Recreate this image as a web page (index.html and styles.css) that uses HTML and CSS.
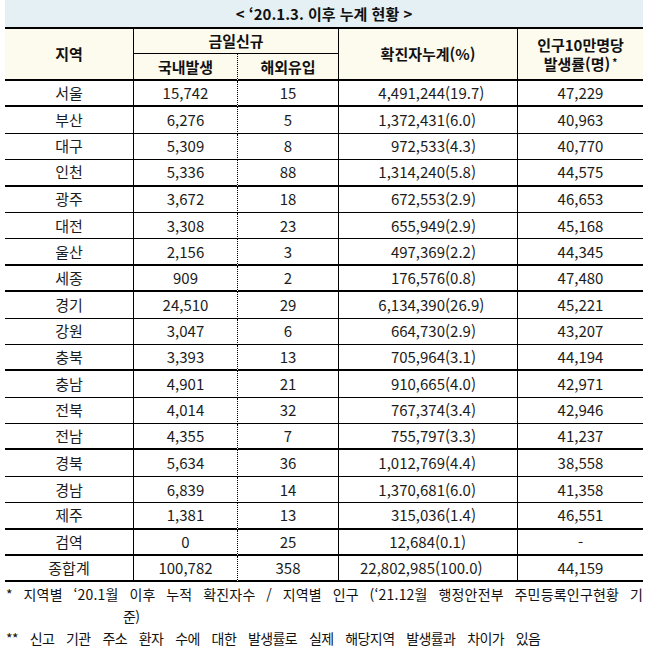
FILE: index.html
```html
<!DOCTYPE html>
<html lang="ko">
<head>
<meta charset="utf-8">
<title>누계 현황</title>
<link rel="stylesheet" href="styles.css">
</head>
<body>
<div class="sheet">
  <div class="title">&lt; ‘20.1.3. 이후 누계 현황 &gt;</div>
  <table class="grid">
    <colgroup>
      <col class="c1"><col class="c2"><col class="c3"><col class="c4"><col class="c5">
    </colgroup>
    <thead>
      <tr class="h1">
        <th rowspan="2" class="vr">지역</th>
        <th colspan="2" class="vr sub">금일신규</th>
        <th rowspan="2" class="vr">확진자누계(%)</th>
        <th rowspan="2" class="two"><div>인구10만명당</div><div>발생률(명)<span class="star">*</span></div></th>
      </tr>
      <tr class="h2">
        <th class="dot">국내발생</th>
        <th class="vr">해외유입</th>
      </tr>
    </thead>
    <tbody>
      <tr class="thick"><td class="vr">서울</td><td class="dot">15,742</td><td class="vr">15</td><td class="vr"><div class="cum"><span class="num">4,491,244</span><span>(19.7)</span></div></td><td>47,229</td></tr>
      <tr><td class="vr">부산</td><td class="dot">6,276</td><td class="vr">5</td><td class="vr"><div class="cum"><span class="num">1,372,431</span><span>(6.0)</span></div></td><td>40,963</td></tr>
      <tr><td class="vr">대구</td><td class="dot">5,309</td><td class="vr">8</td><td class="vr"><div class="cum"><span class="num">972,533</span><span>(4.3)</span></div></td><td>40,770</td></tr>
      <tr class="thick"><td class="vr">인천</td><td class="dot">5,336</td><td class="vr">88</td><td class="vr"><div class="cum"><span class="num">1,314,240</span><span>(5.8)</span></div></td><td>44,575</td></tr>
      <tr><td class="vr">광주</td><td class="dot">3,672</td><td class="vr">18</td><td class="vr"><div class="cum"><span class="num">672,553</span><span>(2.9)</span></div></td><td>46,653</td></tr>
      <tr><td class="vr">대전</td><td class="dot">3,308</td><td class="vr">23</td><td class="vr"><div class="cum"><span class="num">655,949</span><span>(2.9)</span></div></td><td>45,168</td></tr>
      <tr class="thick"><td class="vr">울산</td><td class="dot">2,156</td><td class="vr">3</td><td class="vr"><div class="cum"><span class="num">497,369</span><span>(2.2)</span></div></td><td>44,345</td></tr>
      <tr class="thick"><td class="vr">세종</td><td class="dot">909</td><td class="vr">2</td><td class="vr"><div class="cum"><span class="num">176,576</span><span>(0.8)</span></div></td><td>47,480</td></tr>
      <tr><td class="vr">경기</td><td class="dot">24,510</td><td class="vr">29</td><td class="vr"><div class="cum"><span class="num">6,134,390</span><span>(26.9)</span></div></td><td>45,221</td></tr>
      <tr><td class="vr">강원</td><td class="dot">3,047</td><td class="vr">6</td><td class="vr"><div class="cum"><span class="num">664,730</span><span>(2.9)</span></div></td><td>43,207</td></tr>
      <tr class="thick"><td class="vr">충북</td><td class="dot">3,393</td><td class="vr">13</td><td class="vr"><div class="cum"><span class="num">705,964</span><span>(3.1)</span></div></td><td>44,194</td></tr>
      <tr><td class="vr">충남</td><td class="dot">4,901</td><td class="vr">21</td><td class="vr"><div class="cum"><span class="num">910,665</span><span>(4.0)</span></div></td><td>42,971</td></tr>
      <tr><td class="vr">전북</td><td class="dot">4,014</td><td class="vr">32</td><td class="vr"><div class="cum"><span class="num">767,374</span><span>(3.4)</span></div></td><td>42,946</td></tr>
      <tr class="thick"><td class="vr">전남</td><td class="dot">4,355</td><td class="vr">7</td><td class="vr"><div class="cum"><span class="num">755,797</span><span>(3.3)</span></div></td><td>41,237</td></tr>
      <tr><td class="vr">경북</td><td class="dot">5,634</td><td class="vr">36</td><td class="vr"><div class="cum"><span class="num">1,012,769</span><span>(4.4)</span></div></td><td>38,558</td></tr>
      <tr><td class="vr">경남</td><td class="dot">6,839</td><td class="vr">14</td><td class="vr"><div class="cum"><span class="num">1,370,681</span><span>(6.0)</span></div></td><td>41,358</td></tr>
      <tr class="thick"><td class="vr">제주</td><td class="dot">1,381</td><td class="vr">13</td><td class="vr"><div class="cum"><span class="num">315,036</span><span>(1.4)</span></div></td><td>46,551</td></tr>
      <tr class="thick"><td class="vr">검역</td><td class="dot">0</td><td class="vr">25</td><td class="vr"><div class="cum short"><span class="num">12,684</span><span>(0.1)</span></div></td><td>-</td></tr>
      <tr class="thick"><td class="vr">종합계</td><td class="dot">100,782</td><td class="vr">358</td><td class="vr"><div class="cum short"><span class="num">22,802,985</span><span>(100.0)</span></div></td><td>44,159</td></tr>
    </tbody>
  </table>
  <div class="notes">
    <div class="n1">* 지역별 ‘20.1월 이후 누적 확진자수 / 지역별 인구 (‘21.12월 행정안전부 주민등록인구현황 기</div>
    <div class="n2">준)</div>
    <div class="n3">** 신고 기관 주소 환자 수에 대한 발생률로 실제 해당지역 발생률과 차이가 있음</div>
  </div>
</div>
</body>
</html>
```

FILE: styles.css
```css
body {
  margin: 0;
  background: #ffffff;
  font-family: "Noto Sans CJK KR", "Noto Sans", sans-serif;
  color: #1c1c1c;
}

.sheet {
  width: 638px;
  margin-left: 5px;
}

.title {
  height: 27px;
  line-height: 27px;
  background: #e4f0f3;
  text-align: center;
  font-weight: 700;
  font-size: 15px;
  color: #111;
  border-bottom: 2px solid #000;
}

.grid {
  width: 638px;
  border-collapse: separate;
  border-spacing: 0;
  table-layout: fixed;
  font-size: 15px;
  line-height: 20px;
}

.c1 { width: 129px; }
.c2 { width: 104px; }
.c3 { width: 101px; }
.c4 { width: 179px; }
.c5 { width: 125px; }

.grid th,
.grid td {
  padding: 0;
  text-align: center;
  vertical-align: middle;
  box-sizing: border-box;
  white-space: nowrap;
}

.grid th {
  background: #fdfaee;
  font-weight: 700;
  color: #111;
}

.h1 { height: 25px; }
.h2 { height: 27px; }

.h2 th,
.grid th[rowspan] {
  border-bottom: 2px solid #000;
}

.grid th.sub {
  border-bottom: 1px solid #000;
}

.two {
  line-height: 19px;
}

.star {
  display: inline-block;
  font-size: 10px;
  line-height: 8px;
  vertical-align: top;
  margin-left: 2px;
  margin-top: 4px;
}

.grid tbody tr {
  height: 26.4px;
}

.grid tbody td {
  border-bottom: 1px solid #000;
}

.grid tbody tr.thick td {
  border-bottom-width: 2px;
}

.vr {
  border-right: 1px solid #000;
}

.dot {
  border-right: 1px dotted #000;
}

.cum {
  display: flex;
  justify-content: flex-start;
}

.cum .num {
  width: 106px;
  text-align: right;
}

.cum.short .num {
  width: 96px;
}

.notes {
  font-size: 14px;
  line-height: 22px;
  letter-spacing: -0.6px;
  word-spacing: 8.5px;
  color: #111;
  padding-left: 1px;
  padding-top: 1px;
}

.n1 {
  text-align: justify;
  text-align-last: justify;
  white-space: nowrap;
  letter-spacing: 0.2px;
  word-spacing: 4px;
}

.n2 {
  padding-left: 117px;
}
```
